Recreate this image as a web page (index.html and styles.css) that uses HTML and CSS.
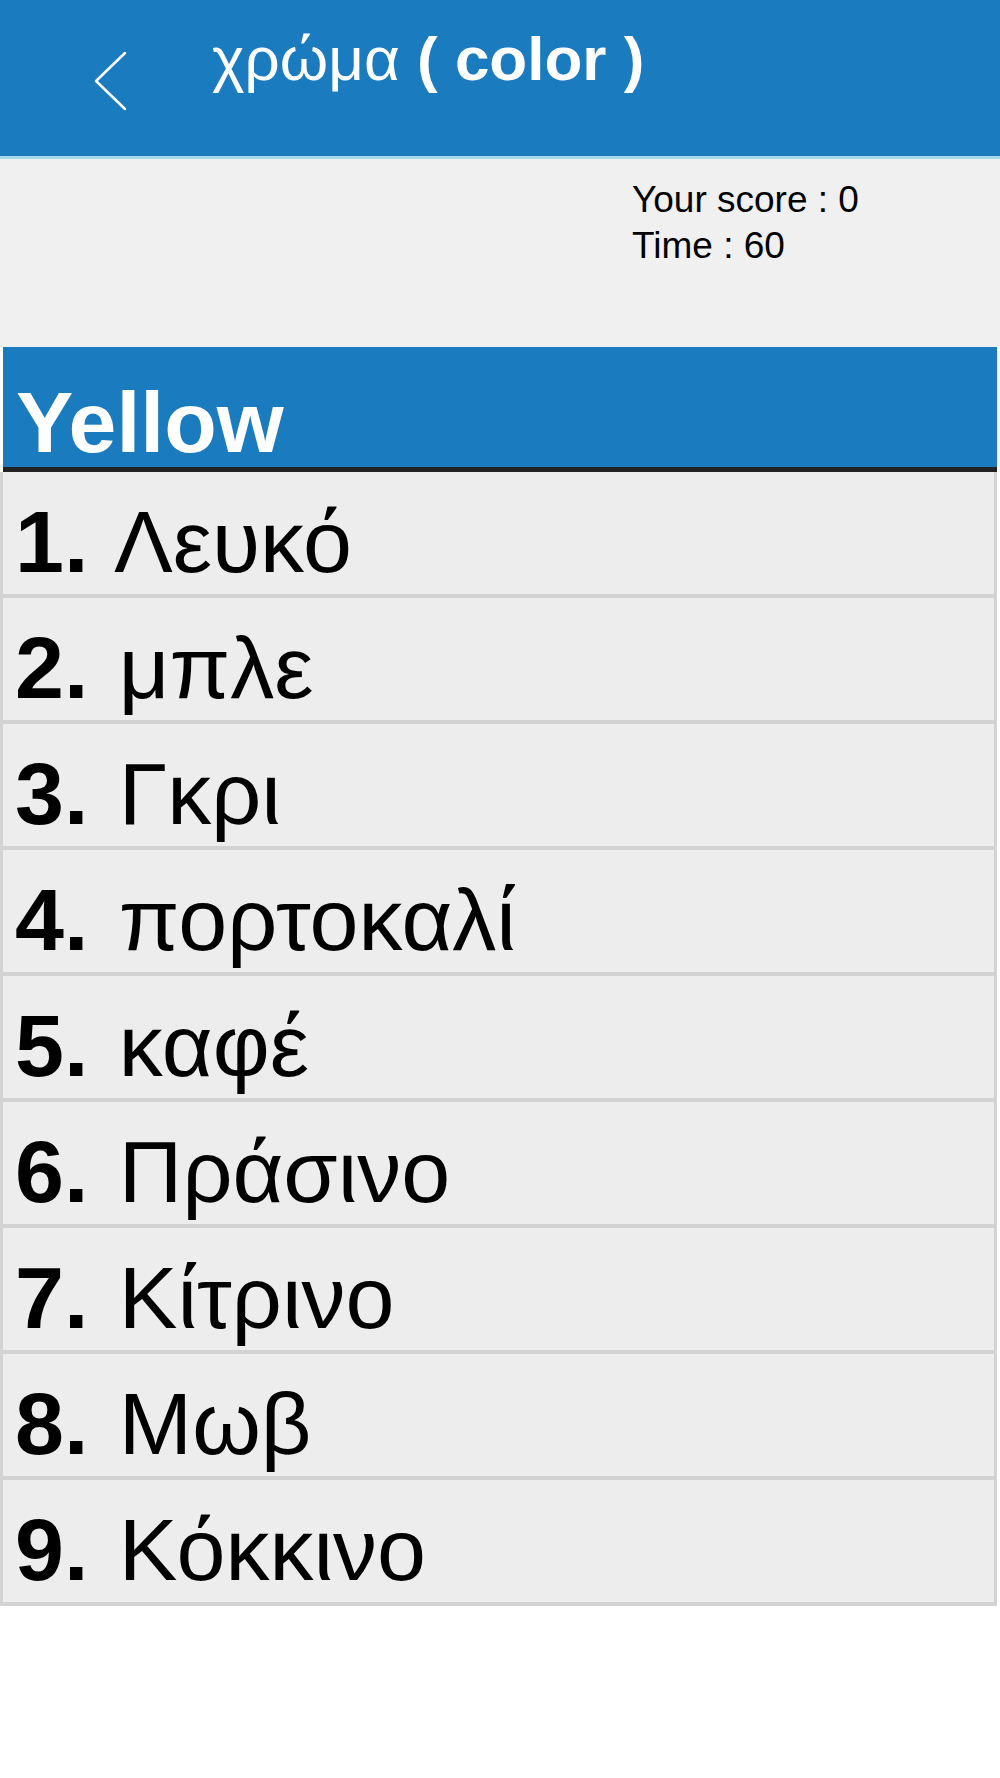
FILE: index.html
```html
<!DOCTYPE html>
<html lang="el">
<head>
    <meta charset="UTF-8">
    <meta name="viewport" content="width=device-width, initial-scale=1.0">
    <title>χρώμα ( color )</title>
    <link rel="stylesheet" href="styles.css">
</head>
<body>
    <header class="top-bar">
        <svg class="back-icon" viewBox="0 0 34 60" aria-label="Back">
            <polyline points="32,2 3,30 32,58" fill="none" stroke="#ffffff" stroke-width="2.5" stroke-linecap="round" stroke-linejoin="round"/>
        </svg>
        <h1 class="title">χρώμα <b>( color )</b></h1>
    </header>

    <div class="score-panel">
        <div>Your score : 0</div>
        <div>Time : 60</div>
    </div>

    <div class="question">Yellow</div>

    <ul class="answers">
        <li><b>1.</b> Λευκό</li>
        <li><b>2.</b> μπλε</li>
        <li><b>3.</b> Γκρι</li>
        <li><b>4.</b> πορτοκαλί</li>
        <li><b>5.</b> καφέ</li>
        <li><b>6.</b> Πράσινο</li>
        <li><b>7.</b> Κίτρινο</li>
        <li><b>8.</b> Μωβ</li>
        <li><b>9.</b> Κόκκινο</li>
    </ul>
</body>
</html>
```

FILE: styles.css
```css
:root {
    --blue: #1a7bbf;
    --panel-bg: #f0f0f0;
    --row-bg: #ededed;
    --row-border: #d3d3d3;
}

body {
    margin: 0;
    font-family: 'Liberation Sans', Arial, sans-serif;
    background-color: #ffffff;
    color: #000000;
}

.top-bar {
    display: flex;
    align-items: flex-start;
    height: 159px; /* includes the light bottom line */
    padding: 28px 0 0 93px;
    box-sizing: border-box;
    background-color: var(--blue);
    border-bottom: 3px solid #a9d9e8;
    color: #ffffff;
}

.back-icon {
    width: 34px;
    height: 60px;
    margin-top: 23px;
}

.title {
    margin: 0 0 0 85px;
    font-size: 62px;
    line-height: 62px;
    font-weight: normal;
}

.score-panel {
    height: 188px;
    padding: 18px 0 0 632px;
    box-sizing: border-box;
    background-color: var(--panel-bg);
    font-size: 37px;
    line-height: 46px;
}

.question {
    height: 125px;
    margin: 0 3px;
    padding: 32px 0 0 13px;
    box-sizing: border-box;
    background-color: var(--blue);
    border-bottom: 5px solid #222222;
    color: #ffffff;
    font-size: 86px;
    line-height: 86px;
    font-weight: bold;
}

.answers {
    list-style: none;
    margin: 0 3px 0 0;
    padding: 0;
    border-left: 3px solid var(--row-border);
    border-right: 3px solid var(--row-border);
}

.answers li {
    height: 126px;
    padding: 26px 0 0 12px;
    box-sizing: border-box;
    background-color: var(--row-bg);
    border-bottom: 4px solid var(--row-border);
    font-size: 88px;
    line-height: 88px;
}

.answers li b {
    margin-right: 6px;
}
```
